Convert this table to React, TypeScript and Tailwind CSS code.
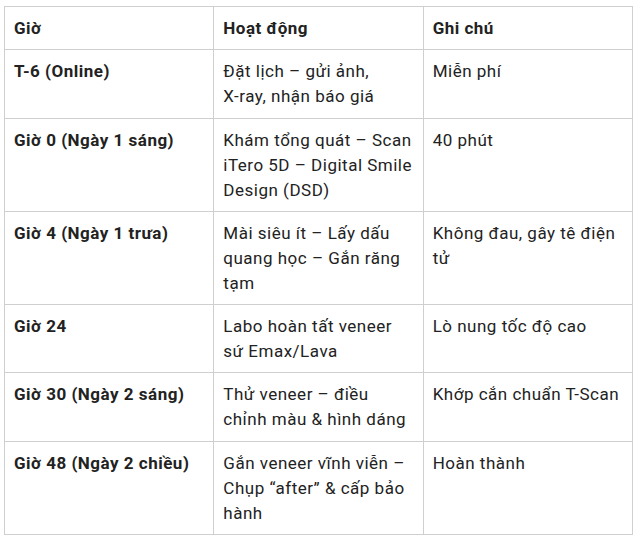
import type { ReactNode } from "react";

const rows: [string, ReactNode, string][] = [
  [
    "T-6 (Online)",
    <>
      Đặt lịch – gửi ảnh, <span className="whitespace-nowrap">X-ray,</span> nhận báo giá
    </>,
    "Miễn phí",
  ],
  [
    "Giờ 0 (Ngày 1 sáng)",
    "Khám tổng quát – Scan iTero 5D – Digital Smile Design (DSD)",
    "40 phút",
  ],
  [
    "Giờ 4 (Ngày 1 trưa)",
    "Mài siêu ít – Lấy dấu quang học – Gắn răng tạm",
    "Không đau, gây tê điện tử",
  ],
  ["Giờ 24", "Labo hoàn tất veneer sứ Emax/Lava", "Lò nung tốc độ cao"],
  [
    "Giờ 30 (Ngày 2 sáng)",
    "Thử veneer – điều chỉnh màu & hình dáng",
    "Khớp cắn chuẩn T-Scan",
  ],
  [
    "Giờ 48 (Ngày 2 chiều)",
    "Gắn veneer vĩnh viễn – Chụp “after” & cấp bảo hành",
    "Hoàn thành",
  ],
];

const cell =
  "border border-[#cfcfcf] px-[9px] pt-[9px] pb-[8.3px] align-top text-left";

export default function App() {
  return (
    <main className="min-h-[537px] bg-white pl-[4px] pt-[6px] font-['Roboto',sans-serif] text-[17px] leading-[25px] tracking-[0.5px] text-[#222]">
      <table className="w-[629px] table-fixed border-collapse">
        <thead>
          <tr>
            <th className={cell + " font-bold"}>Giờ</th>
            <th className={cell + " font-bold"}>Hoạt động</th>
            <th className={cell + " font-bold"}>Ghi chú</th>
          </tr>
        </thead>
        <tbody>
          {rows.map((r) => (
            <tr key={r[0]}>
              <td className={cell + " font-bold"}>{r[0]}</td>
              <td className={cell}>{r[1]}</td>
              <td className={cell}>{r[2]}</td>
            </tr>
          ))}
        </tbody>
      </table>
    </main>
  );
}
